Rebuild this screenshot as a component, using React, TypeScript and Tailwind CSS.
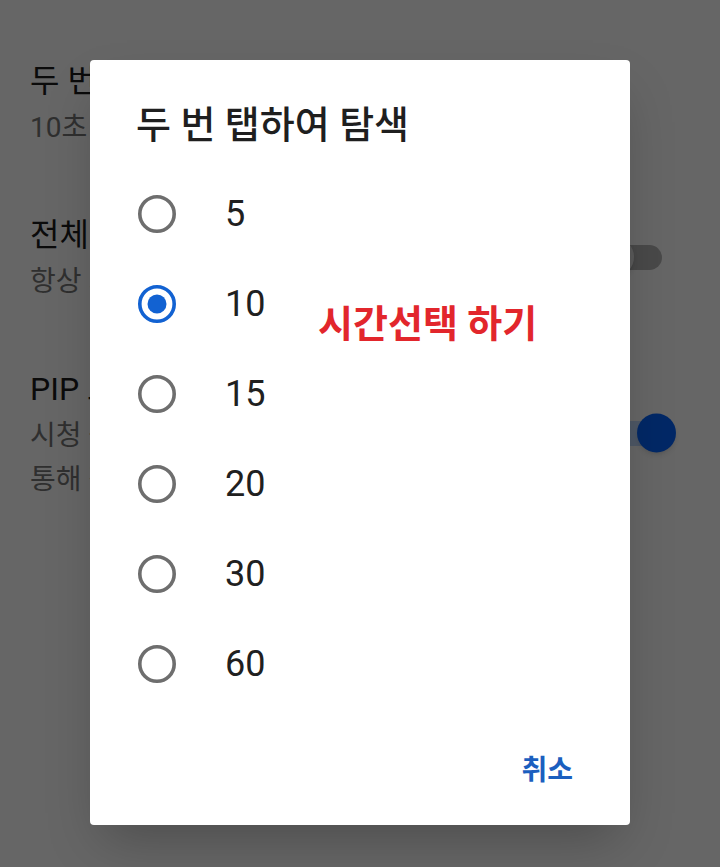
import React, { useState } from 'react';

const OPTIONS = [5, 10, 15, 20, 30, 60];

const FONT = "font-['Roboto','Noto_Sans_CJK_KR',sans-serif]";

interface SettingRowProps {
  title: string;
  lines: string[];
  toggle?: 'on' | 'off';
}

const SettingRow: React.FC<SettingRowProps> = ({ title, lines, toggle }) => (
  <div className="flex items-center justify-between pl-[30px] pr-[58px]">
    <div className="flex flex-col">
      <div className="text-[32px] leading-[50px] text-[#1c1c1c]">{title}</div>
      {lines.map((line) => (
        <div key={line} className="text-[28px] leading-[44px] text-[#777777]">
          {line}
        </div>
      ))}
    </div>
    {toggle && <Switch on={toggle === 'on'} />}
  </div>
);

const Switch: React.FC<{ on: boolean }> = ({ on }) => (
  <div className="relative w-[64px] h-[25px]">
    <div className={`w-full h-full rounded-full ${on ? 'bg-[#c4dcff]' : 'bg-[#b6b6b6]'}`} />
    <div
      className={`absolute top-1/2 -translate-y-1/2 w-[39px] h-[39px] rounded-full shadow-md ${
        on ? 'right-[-14px] bg-[#0565ff]' : 'left-[-3px] bg-[#e2e2e2]'
      }`}
    />
  </div>
);

const Radio: React.FC<{ checked: boolean }> = ({ checked }) => (
  <svg width="40" height="40" viewBox="0 0 40 40">
    <circle
      cx="20"
      cy="20"
      r="17.2"
      fill="none"
      stroke={checked ? '#1262d2' : '#6e6e6e'}
      strokeWidth="3.6"
    />
    {checked && <circle cx="20" cy="20" r="9.5" fill="#1262d2" />}
  </svg>
);

export default function App() {
  const [seconds, setSeconds] = useState(10);

  return (
    <div className={`relative w-[720px] h-[867px] overflow-hidden bg-white ${FONT}`}>
      {/* settings list underneath */}
      <div className="flex flex-col pt-[56px] gap-[60px]">
        <SettingRow title="두 번 탭하여 탐색" lines={['10초']} />
        <SettingRow title="전체 화면" lines={['항상 가로 모드']} toggle="off" />
        <SettingRow title="PIP 모드" lines={['시청 중인 동영상을', '통해 작은 화면']} toggle="on" />
      </div>

      {/* scrim */}
      <div className="absolute inset-0 bg-black/60" />

      {/* dialog */}
      <div className="absolute left-[90px] top-[60px] w-[540px] h-[765px] bg-white rounded-[4px] shadow-2xl flex flex-col">
        <div className="pl-[46px] pt-[40px] text-[38px] leading-[50px] font-medium text-[#1f1f1f]">
          두 번 탭하여 탐색
        </div>
        <div className="flex flex-col mt-[19px]">
          {OPTIONS.map((n) => (
            <button
              key={n}
              onClick={() => setSeconds(n)}
              className="flex items-center h-[90px] pl-[47px] text-left"
            >
              <Radio checked={seconds === n} />
              <span className="ml-[48px] text-[36px] text-[#202020]">{n}</span>
            </button>
          ))}
        </div>
        <div className="flex justify-end pr-[57px] mt-auto pb-[34px]">
          <button className="text-[28px] leading-[40px] font-bold text-[#1b5fbf]">취소</button>
        </div>

        <div className="absolute left-[228px] top-[236px] text-[38px] font-bold text-[#e2262c]">
          시간선택 하기
        </div>
      </div>
    </div>
  );
}
